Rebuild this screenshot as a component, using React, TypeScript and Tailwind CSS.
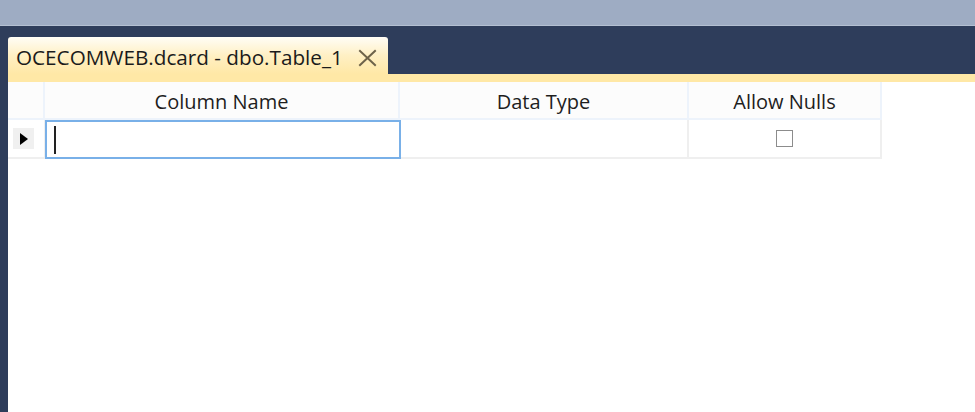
import React from 'react';

const font = { fontFamily: '"Open Sans", "Noto Sans", sans-serif' };

function CloseIcon() {
  return (
    <svg width="19" height="18" viewBox="0 0 19 18" className="text-[#6e634a]">
      <path d="M2 2 L17 16 M17 2 L2 16" stroke="currentColor" strokeWidth="2" strokeLinecap="square" />
    </svg>
  );
}

function HeaderCell({ label, className }: { label?: string; className: string }) {
  return (
    <div
      className={`flex h-[38px] items-center justify-center border-r-2 border-b-2 border-[#edf3fb] bg-[#fcfcfc] pt-[4px] text-[20px] leading-none text-[#1e1e1e] ${className}`}
    >
      {label}
    </div>
  );
}

export default function App() {
  return (
    <div className="flex h-[412px] w-[975px] flex-col overflow-hidden bg-[#2e3d5b] select-none" style={font}>
      {/* window chrome */}
      <div className="h-[26px] shrink-0 border-b border-[#b4c0d2] bg-[#9eacc3]" />

      <div className="flex flex-1 flex-col pl-[8px]">
        {/* tab strip */}
        <div className="flex h-[48px] shrink-0 items-end">
          <div className="flex h-[37px] w-[380px] items-center justify-between rounded-t-[3px] bg-gradient-to-b from-[#fffdf6] via-[#fff0c4] to-[#ffe8a6] pt-[4px] pl-[8px] pr-[11px]">
            <span className="text-[20.7px] leading-none text-[#1b1b1b]">OCECOMWEB.dcard - dbo.Table_1</span>
            <CloseIcon />
          </div>
        </div>
        <div className="h-[8px] shrink-0 bg-[#ffe8a6]" />

        {/* table designer grid */}
        <div className="flex-1 bg-white">
          <div className="flex">
            <HeaderCell className="w-[37px]" />
            <HeaderCell label="Column Name" className="w-[355px]" />
            <HeaderCell label="Data Type" className="w-[289px]" />
            <HeaderCell label="Allow Nulls" className="w-[193px]" />
          </div>
          <div className="flex h-[39px]">
            <div className="flex w-[37px] items-center border-r border-b-2 border-[#efefef] pl-[5px]">
              <div className="flex h-[21px] w-[21px] items-center justify-center bg-[#f0f0f0]">
                <svg width="10" height="12" viewBox="0 0 10 12">
                  <path d="M1 0 L9 6 L1 12 Z" fill="#000" />
                </svg>
              </div>
            </div>
            <div className="flex w-[356px] items-center border-2 border-[#79b0e8] pl-[7px]">
              <div className="h-[28px] w-[2px] bg-[#222]" />
            </div>
            <div className="w-[288px] border-r-2 border-b-2 border-[#efefef]" />
            <div className="flex w-[193px] items-center justify-center border-r-2 border-b-2 border-[#efefef]">
              <div className="h-[17px] w-[17px] border border-[#8c8c8c] bg-white" />
            </div>
          </div>
        </div>
      </div>
    </div>
  );
}
